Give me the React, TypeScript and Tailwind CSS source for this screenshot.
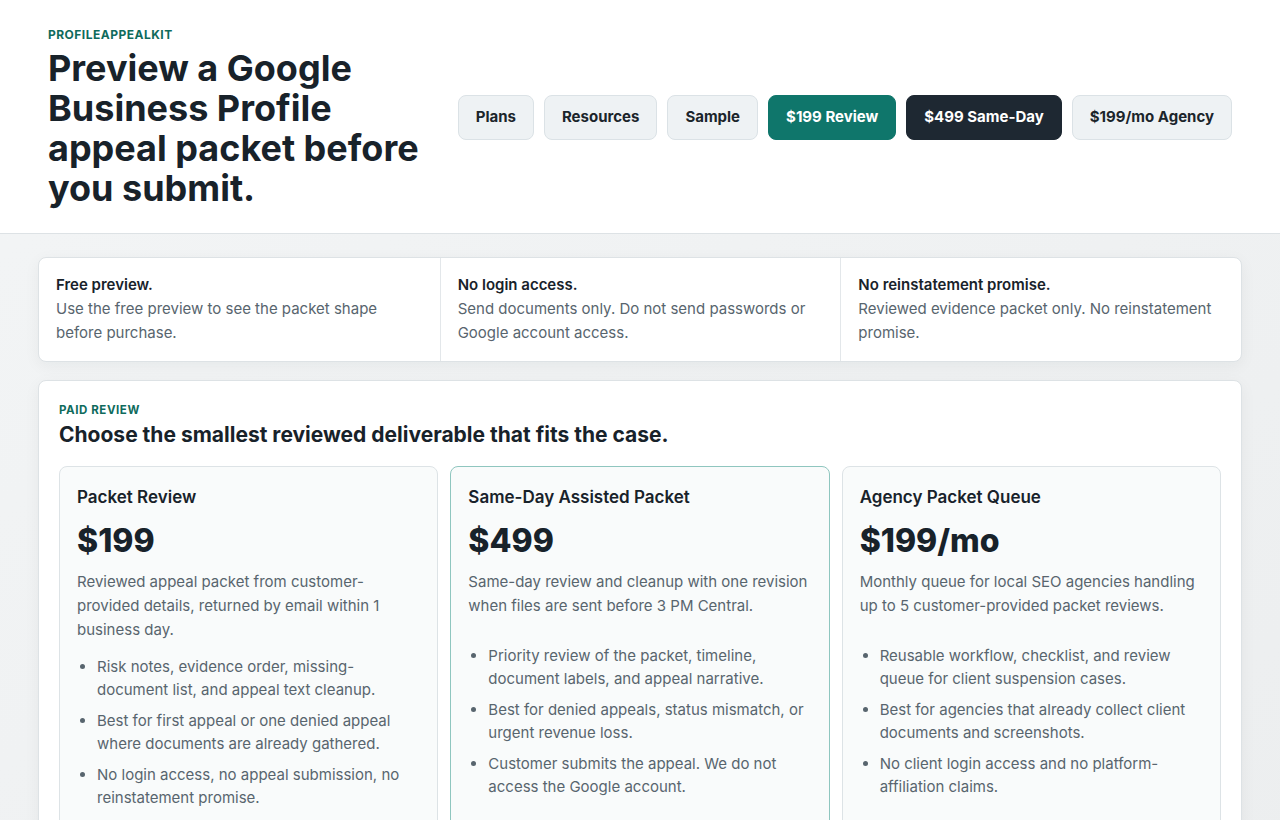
import React from 'react';

const navItems = [
  { label: 'Plans', style: 'bg-[#eef2f4] border-[#dbe2e6] text-[#1b252b]' },
  { label: 'Resources', style: 'bg-[#eef2f4] border-[#dbe2e6] text-[#1b252b]' },
  { label: 'Sample', style: 'bg-[#eef2f4] border-[#dbe2e6] text-[#1b252b]' },
  { label: '$199 Review', style: 'bg-[#0f766b] border-[#0f766b] text-white' },
  { label: '$499 Same-Day', style: 'bg-[#1e2832] border-[#1e2832] text-white' },
  { label: '$199/mo Agency', style: 'bg-[#eef2f4] border-[#dbe2e6] text-[#1b252b]' },
];

const notes = [
  { title: 'Free preview.', text: 'Use the free preview to see the packet shape before purchase.' },
  { title: 'No login access.', text: 'Send documents only. Do not send passwords or Google account access.' },
  { title: 'No reinstatement promise.', text: 'Reviewed evidence packet only. No reinstatement promise.' },
];

const plans = [
  {
    name: 'Packet Review',
    price: '$199',
    desc: 'Reviewed appeal packet from customer-provided details, returned by email within 1 business day.',
    items: [
      'Risk notes, evidence order, missing-document list, and appeal text cleanup.',
      'Best for first appeal or one denied appeal where documents are already gathered.',
      'No login access, no appeal submission, no reinstatement promise.',
    ],
    featured: false,
  },
  {
    name: 'Same-Day Assisted Packet',
    price: '$499',
    desc: 'Same-day review and cleanup with one revision when files are sent before 3 PM Central.',
    items: [
      'Priority review of the packet, timeline, document labels, and appeal narrative.',
      'Best for denied appeals, status mismatch, or urgent revenue loss.',
      'Customer submits the appeal. We do not access the Google account.',
    ],
    featured: true,
  },
  {
    name: 'Agency Packet Queue',
    price: '$199/mo',
    desc: 'Monthly queue for local SEO agencies handling up to 5 customer-provided packet reviews.',
    items: [
      'Reusable workflow, checklist, and review queue for client suspension cases.',
      'Best for agencies that already collect client documents and screenshots.',
      'No client login access and no platform-affiliation claims.',
    ],
    featured: false,
  },
];

export default function App() {
  return (
    <div className="min-h-screen bg-gradient-to-br from-[#f3f5f6] to-[#eceeef] font-['Inter',sans-serif] text-[#1b252b]">
      <header className="bg-white border-b border-[#dde2e5] px-12 pt-[27px] pb-[25px] flex items-center justify-between">
        <div className="w-[390px]">
          <div className="text-[12px] font-bold tracking-[0.04em] text-[#0f6b5c] leading-[16px]">PROFILEAPPEALKIT</div>
          <h1 className="mt-[5px] text-[36px] leading-[40px] font-bold tracking-[0em] text-[#18222a]">
            Preview a Google Business Profile appeal packet before you submit.
          </h1>
        </div>
        <nav className="flex gap-[10px]">
          {navItems.map((n) => (
            <button
              key={n.label}
              className={`h-[45px] px-[17px] rounded-lg border text-[15px] font-bold ${n.style}`}
            >
              {n.label}
            </button>
          ))}
        </nav>
      </header>

      <main className="px-[38px] pt-[23px] pb-10">
        <section className="grid grid-cols-3 bg-white border border-[#dde2e5] rounded-lg shadow-[0_4px_16px_rgba(20,30,40,0.05)]">
          {notes.map((n, i) => (
            <div
              key={n.title}
              className={`px-[17px] pt-[15px] pb-[16px] ${i > 0 ? 'border-l border-[#e3e7ea]' : ''}`}
            >
              <div className="text-[15px] font-semibold leading-[24px] text-[#18222a]">{n.title}</div>
              <p className="text-[15px] leading-[24px] text-[#58656e]">{n.text}</p>
            </div>
          ))}
        </section>

        <section className="mt-[18px] bg-white border border-[#dde2e5] rounded-lg shadow-[0_4px_16px_rgba(20,30,40,0.05)] px-[20px] pt-[21px] pb-6">
          <div className="text-[11.5px] font-bold tracking-[0.05em] text-[#0f6b5c] leading-[16px]">PAID REVIEW</div>
          <h2 className="mt-[3px] text-[21px] font-bold leading-[28px] text-[#18222a]">
            Choose the smallest reviewed deliverable that fits the case.
          </h2>
          <div className="mt-[17px] grid grid-cols-3 gap-3">
            {plans.map((p) => (
              <div
                key={p.name}
                className={`rounded-lg border bg-[#f9fbfb] px-[17px] pt-[17px] pb-6 ${p.featured ? 'border-[#8fc6bf]' : 'border-[#dde3e6]'}`}
              >
                <h3 className="text-[17px] font-semibold leading-[26px] text-[#18222a]">{p.name}</h3>
                <div className="mt-[13px] text-[32px] font-extrabold leading-[36px] text-[#18222a]">{p.price}</div>
                <p className="mt-[11px] min-h-[61px] text-[15px] leading-[24px] text-[#58656e]">{p.desc}</p>
                <ul className="mt-[13px] pl-[20px] list-disc text-[15px] leading-[23px] text-[#58656e] space-y-[8px] marker:text-[#58656e]">
                  {p.items.map((it) => (
                    <li key={it}>{it}</li>
                  ))}
                </ul>
              </div>
            ))}
          </div>
        </section>
      </main>
    </div>
  );
}
